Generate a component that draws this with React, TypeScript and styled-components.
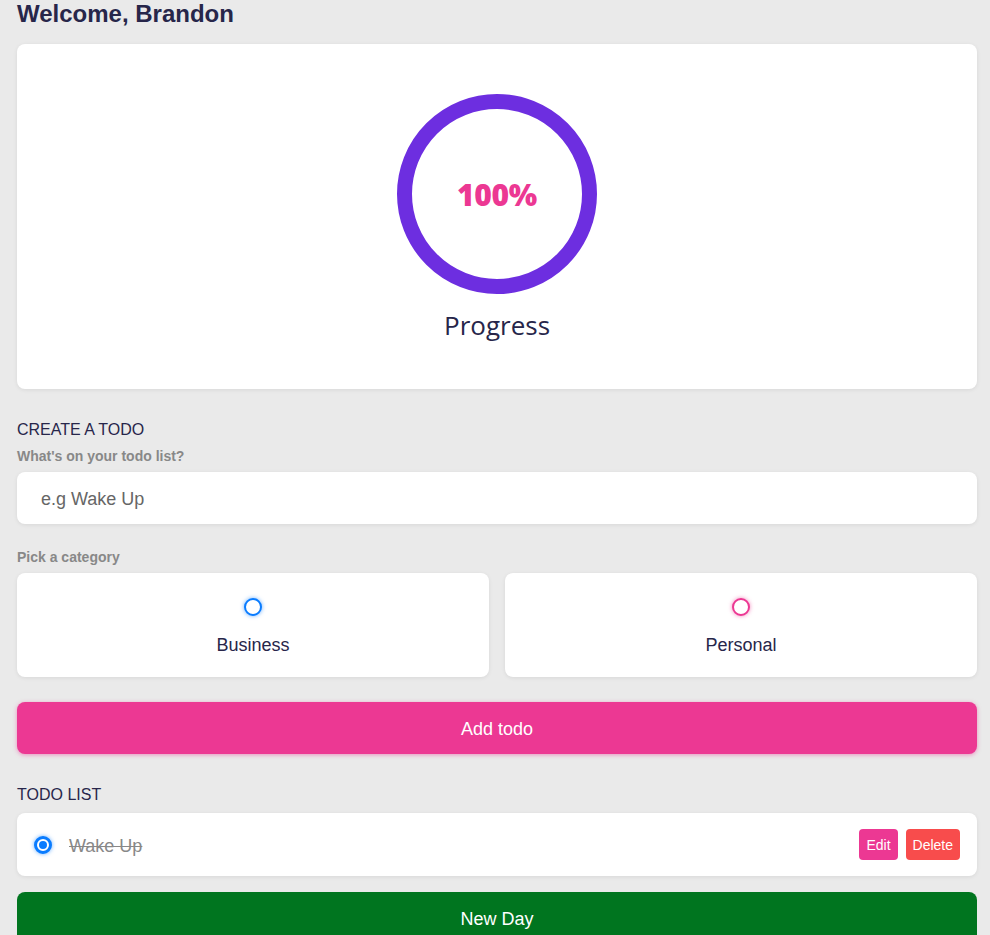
import React from "react";
import styled, { createGlobalStyle } from "styled-components";

const Global = createGlobalStyle`
  html, body { margin: 0; padding: 0; background: #eaeaea; }
  body { font-family: "Liberation Sans", Arial, sans-serif; color: #27264a; }
`;

const Page = styled.div`
  width: 960px;
  padding: 0 13px 40px 17px;
  display: flex;
  flex-direction: column;
`;

const Title = styled.h1`
  margin: 0 0 16px;
  font-size: 24px;
  line-height: 28px;
  font-weight: 700;
  color: #27264a;
`;

const Card = styled.div`
  background: #fff;
  border-radius: 8px;
  box-shadow: 0 1px 4px rgba(0, 0, 0, 0.08);
`;

const ProgressCard = styled(Card)`
  display: flex;
  flex-direction: column;
  align-items: center;
  padding: 50px 0 49px;
  gap: 16px;
`;

const Ring = styled.div`
  position: relative;
  width: 200px;
  height: 200px;
  display: flex;
  align-items: center;
  justify-content: center;
`;

const RingSvg = styled.svg`
  position: absolute;
  inset: 0;
`;

const Percent = styled.span`
  font-family: "Open Sans", "Noto Sans", sans-serif;
  font-weight: 800;
  font-size: 30px;
  color: #ec3893;
  letter-spacing: -0.3px;
`;

const ProgressLabel = styled.div`
  font-family: "Open Sans", "Noto Sans", sans-serif;
  font-size: 26px;
  line-height: 30px;
  color: #27264a;
`;

const SectionTitle = styled.h3<{ $top: number }>`
  margin: ${(p) => p.$top}px 0 7px;
  font-size: 16px;
  line-height: 22px;
  font-weight: 400;
  color: #27264a;
`;

const FieldLabel = styled.h4<{ $top?: number }>`
  margin: ${(p) => p.$top ?? 0}px 0 8px;
  font-size: 14px;
  line-height: 16px;
  font-weight: 700;
  color: #888;
`;

const Input = styled.input`
  display: block;
  box-sizing: border-box;
  width: 100%;
  height: 52px;
  border: none;
  border-radius: 8px;
  padding: 2px 24px 0;
  font-family: "Liberation Sans", Arial, sans-serif;
  font-size: 18px;
  color: #27264a;
  background: #fff;
  box-shadow: 0 1px 4px rgba(0, 0, 0, 0.08);
  outline: none;
  &::placeholder { color: #666; }
`;

const Options = styled.div`
  display: grid;
  grid-template-columns: 1fr 1fr;
  gap: 16px;
`;

const Option = styled(Card).attrs({ as: "label" })`
  display: flex;
  flex-direction: column;
  align-items: center;
  height: 104px;
  box-sizing: border-box;
  padding-top: 25px;
  gap: 18px;
  cursor: pointer;
`;

const Bubble = styled.span<{ $color: string; $checked?: boolean }>`
  box-sizing: border-box;
  width: 18px;
  height: 18px;
  border-radius: 50%;
  border: 2px solid ${(p) => p.$color};
  box-shadow: 0 0 4px ${(p) => p.$color}99;
  background: ${(p) => (p.$checked ? p.$color : "#fff")};
  position: relative;
  flex: none;
  &::after {
    content: "";
    display: ${(p) => (p.$checked ? "block" : "none")};
    position: absolute;
    inset: 1px;
    border-radius: 50%;
    border: 2px solid #fff;
    box-sizing: border-box;
    background: ${(p) => p.$color};
  }
`;

const OptionText = styled.span`
  font-size: 18px;
  line-height: 22px;
  color: #27264a;
`;

const BigButton = styled.button<{ $bg: string; $glow?: string; $top: number }>`
  display: block;
  width: 100%;
  height: 52px;
  margin-top: ${(p) => p.$top}px;
  padding-top: 4px;
  border: none;
  border-radius: 8px;
  background: ${(p) => p.$bg};
  color: #fff;
  font-family: "Liberation Sans", Arial, sans-serif;
  font-size: 18px;
  box-shadow: ${(p) => (p.$glow ? `0 1px 4px ${p.$glow}` : "none")};
  cursor: pointer;
`;

const TodoItem = styled(Card)`
  display: flex;
  align-items: center;
  height: 63px;
  box-sizing: border-box;
  padding: 0 16px 0 17px;
  gap: 17px;
`;

const TodoText = styled.span`
  flex: 1;
  font-size: 18px;
  line-height: 22px;
  padding-top: 2px;
  color: #888;
  text-decoration: line-through;
`;

const Actions = styled.div`
  display: flex;
  gap: 8px;
  margin-right: 1px;
`;

const SmallButton = styled.button<{ $bg: string }>`
  height: 31px;
  padding: 1px 7px 0;
  border: none;
  border-radius: 4px;
  background: ${(p) => p.$bg};
  color: #fff;
  font-family: "Liberation Sans", Arial, sans-serif;
  font-size: 14px;
  cursor: pointer;
`;

export default function App() {
  const r = 92.5;
  return (
    <Page>
      <Global />
      <Title>Welcome, Brandon</Title>
      <ProgressCard>
        <Ring>
          <RingSvg width="200" height="200" viewBox="0 0 200 200">
            <circle cx="100" cy="100" r={r} fill="none" stroke="#6d2ee0" strokeWidth="15" />
          </RingSvg>
          <Percent>100%</Percent>
        </Ring>
        <ProgressLabel>Progress</ProgressLabel>
      </ProgressCard>

      <SectionTitle $top={30}>CREATE A TODO</SectionTitle>
      <FieldLabel>What's on your todo list?</FieldLabel>
      <Input placeholder="e.g Wake Up" />

      <FieldLabel $top={25}>Pick a category</FieldLabel>
      <Options>
        <Option>
          <Bubble $color="#0a7cff" />
          <OptionText>Business</OptionText>
        </Option>
        <Option>
          <Bubble $color="#ec3893" />
          <OptionText>Personal</OptionText>
        </Option>
      </Options>

      <BigButton $bg="#ec3893" $glow="rgba(236,56,147,0.5)" $top={25}>Add todo</BigButton>

      <SectionTitle $top={30}>TODO LIST</SectionTitle>
      <TodoItem>
        <Bubble $color="#0a7cff" $checked />
        <TodoText>Wake Up</TodoText>
        <Actions>
          <SmallButton $bg="#ec3893">Edit</SmallButton>
          <SmallButton $bg="#f84c4c">Delete</SmallButton>
        </Actions>
      </TodoItem>

      <BigButton $bg="#00751f" $top={16}>New Day</BigButton>
    </Page>
  );
}
